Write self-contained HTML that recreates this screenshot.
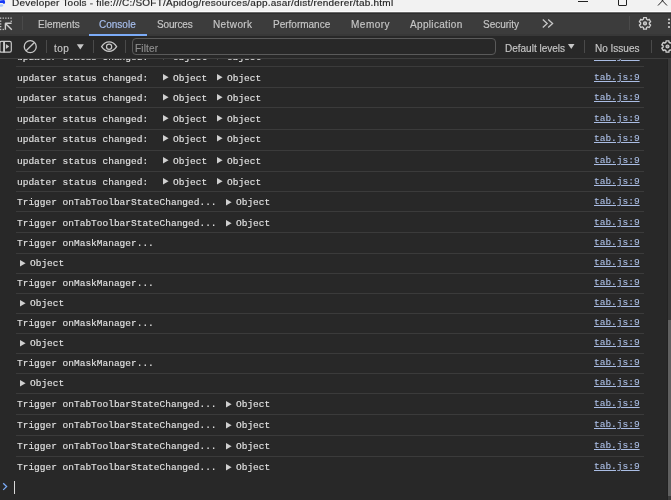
<!DOCTYPE html>
<html><head><meta charset="utf-8">
<style>
*{box-sizing:border-box}
html,body{margin:0;padding:0;width:671px;height:500px;overflow:hidden;background:#282828}
.a{position:absolute;white-space:nowrap;will-change:transform}
.s{font-family:"Liberation Sans",sans-serif;-webkit-text-stroke:0.15px currentColor}
.m{font-family:"Liberation Mono",monospace;font-size:9.5px;color:#e3e3e3;line-height:12px;-webkit-text-stroke:0.12px #e3e3e3}
.b{position:absolute}
.tab{font-size:10px;color:#c7c7c7;top:18px;line-height:14px}
.tb{font-size:10px;color:#c7c7c7;top:41px;line-height:14px}
.div{position:absolute;width:1px;background:#4a4a4a}
.sep{position:absolute;left:16px;width:627.5px;height:1px;background:#3b3b3b}
.lnk{left:594px;color:#aabde4;-webkit-text-stroke:0.12px #aabde4;text-decoration:underline}
.tri{position:absolute}
#con{position:absolute;left:0;top:59px;width:667px;height:441px;overflow:hidden}
</style></head><body>
<div class="b" style="left:0;top:0;width:671px;height:11px;background:#f2f2f2"></div>
<div class="b" style="left:0;top:11px;width:671px;height:1px;background:#fcfcfc"></div>
<div class="b" style="left:0;top:12px;width:671px;height:1px;background:#6a6a6a"></div>
<div class="b" style="left:0;top:13px;width:671px;height:1px;background:#2e2e2e"></div>
<div class="b" style="left:0;top:14px;width:671px;height:20px;background:#3c3c3c"></div>
<div class="b" style="left:0;top:34px;width:671px;height:2px;background:#383838"></div>
<div class="b" style="left:0;top:58px;width:671px;height:1px;background:#3e3e3e"></div>

<!-- title -->
<svg class="b" style="left:0;top:0" width="8" height="9" viewBox="0 0 8 9"><path d="M0,0.6 L4,0 L4.8,0.6 L5.1,2.6 Q5,3.9 4,3.9 Q3.2,3.9 2.6,3.1 L0,3.1Z" fill="#1438f8"/><ellipse cx="1.3" cy="5.5" rx="1.9" ry="1.3" fill="#a8c8fb"/></svg>
<div class="a s" style="left:12px;top:-3px;font-size:10px;color:#1a1a1a;line-height:12px;letter-spacing:0.22px;transform:scaleY(0.84);transform-origin:0 8.9px">Developer Tools - file:///C:/SOFT/Apidog/resources/app.asar/dist/renderer/tab.html</div>
<div class="b" style="left:578px;top:1px;width:10px;height:1px;background:#222"></div>
<div class="b" style="left:618px;top:-4px;width:9px;height:10px;border:1px solid #222;border-radius:1px"></div>
<svg class="b" style="left:657px;top:-4px" width="11" height="11" viewBox="0 0 11 11"><path d="M1,0 L10,9.5 M10,0 L1,9.5" stroke="#222" stroke-width="1"/></svg>

<!-- tab bar -->
<svg class="b" style="left:0;top:15px" width="14" height="18" viewBox="0 0 14 18">
 <g fill="#c7c7c7">
  <rect x="0" y="2.5" width="1.3" height="1.3"/><rect x="2.6" y="2.5" width="1.3" height="1.3"/><rect x="5.2" y="2.5" width="1.3" height="1.3"/><rect x="7.8" y="2.5" width="1.3" height="1.3"/><rect x="10.4" y="2.5" width="1.3" height="1.3"/>
  <rect x="0" y="5.5" width="1.3" height="1.3"/><rect x="0" y="8.3" width="1.3" height="1.3"/><rect x="0" y="11" width="1.3" height="1.3"/><rect x="0" y="13.8" width="1.3" height="1.3"/><rect x="2.6" y="13.8" width="1.3" height="1.3"/>
  <rect x="10.6" y="5.6" width="1.3" height="1.3"/>
 </g>
 <path d="M5.5,8.5 L11.8,14.8 M5.2,8.2 L11.6,8.2 M5.4,8.2 L5.4,14.8" stroke="#d0d0d0" stroke-width="1.4" fill="none"/>
</svg>
<div class="div" style="left:22px;top:16px;height:14px"></div>
<div class="a s tab" style="left:38px">Elements</div>
<div class="a s tab" style="left:99px;color:#a8c0f0">Console</div>
<div class="b" style="left:89px;top:34px;width:58px;height:2px;background:#7cacf8"></div>
<div class="a s tab" style="left:156.5px;letter-spacing:-0.15px">Sources</div>
<div class="a s tab" style="left:213px;letter-spacing:0.4px">Network</div>
<div class="a s tab" style="left:273px">Performance</div>
<div class="a s tab" style="left:351px;letter-spacing:0.5px">Memory</div>
<div class="a s tab" style="left:410px;letter-spacing:0.33px">Application</div>
<div class="a s tab" style="left:482.5px">Security</div>
<svg class="b" style="left:541px;top:18px" width="14" height="11" viewBox="0 0 14 11"><path d="M1.8,1.6 L6.2,5.6 L1.8,9.6 M7.2,1.6 L11.6,5.6 L7.2,9.6" stroke="#c7c7c7" stroke-width="1.3" fill="none"/></svg>
<div class="div" style="left:629px;top:16px;height:14px"></div>
<svg class="b" style="left:636px;top:14px" width="18" height="18" viewBox="636 14 18 18"><path d="M646.56,19.29 L646.46,17.68 L643.54,17.68 L643.44,19.29 L642.22,19.99 L640.78,19.28 L639.32,21.81 L640.66,22.69 L640.66,24.11 L639.32,24.99 L640.78,27.52 L642.22,26.81 L643.44,27.51 L643.54,29.12 L646.46,29.12 L646.56,27.51 L647.78,26.81 L649.22,27.52 L650.68,24.99 L649.34,24.11 L649.34,22.69 L650.68,21.81 L649.22,19.28 L647.78,19.99Z" stroke="#d0d0d0" stroke-width="1.3" fill="none" stroke-linejoin="round"/><circle cx="645" cy="23.4" r="1.5" stroke="#d0d0d0" stroke-width="1.2" fill="#9a9a9a"/></svg>
<svg class="b" style="left:666px;top:17px" width="5" height="12" viewBox="0 0 5 12"><circle cx="3" cy="2.5" r="1.1" fill="#d0d0d0"/><circle cx="3" cy="6" r="1.1" fill="#d0d0d0"/><circle cx="3" cy="10" r="1.1" fill="#d0d0d0"/></svg>

<!-- toolbar -->
<svg class="b" style="left:0;top:38px" width="14" height="18" viewBox="0 38 14 18">
 <rect x="-0.1" y="41.3" width="11.4" height="10.9" rx="1.6" stroke="#c7c7c7" stroke-width="1.2" fill="none"/>
 <rect x="3.1" y="41" width="1.9" height="11.5" fill="#c7c7c7"/>
 <path d="M5.9,43.9 L9.2,46.5 L5.9,49Z" fill="#c7c7c7"/>
</svg>
<svg class="b" style="left:22px;top:38px" width="18" height="18" viewBox="22 38 18 18">
 <circle cx="30.25" cy="46.65" r="6.0" stroke="#c7c7c7" stroke-width="1.3" fill="none"/>
 <path d="M26.1,50.8 L34.4,42.5" stroke="#c7c7c7" stroke-width="1.3"/>
</svg>
<div class="div" style="left:46px;top:40px;height:13px"></div>
<div class="a s tb" style="left:54px;top:41.5px;letter-spacing:0.45px">top</div>
<svg class="b" style="left:76px;top:43px" width="9" height="8" viewBox="0 0 9 8"><path d="M0.8,1.3 L7.8,1.3 L4.3,6.4Z" fill="#c7c7c7"/></svg>
<div class="div" style="left:93px;top:40px;height:13px"></div>
<svg class="b" style="left:99px;top:39px" width="20" height="15" viewBox="99 39 20 15">
 <path d="M101.6,46.55 C104.2,42.6 106.6,41.85 109.1,41.85 C111.6,41.85 114,42.6 116.6,46.55 C114,50.5 111.6,51.25 109.1,51.25 C106.6,51.25 104.2,50.5 101.6,46.55Z" stroke="#c7c7c7" stroke-width="1.3" fill="none"/>
 <circle cx="109.1" cy="46.7" r="2.6" stroke="#c7c7c7" stroke-width="1.2" fill="none"/>
</svg>
<div class="div" style="left:125px;top:40px;height:13px"></div>
<div class="b" style="left:132px;top:38px;width:364px;height:17px;border:1px solid #5a5a5a;border-radius:4px"></div>
<div class="a s tb" style="left:135px;top:42px;letter-spacing:0.15px;color:#8f8f8f">Filter</div>
<div class="a s tb" style="left:504.5px;top:41.5px">Default levels</div>
<svg class="b" style="left:567px;top:43px" width="9" height="8" viewBox="0 0 9 8"><path d="M1,1 L7.5,1 L4.25,5.9Z" fill="#c7c7c7"/></svg>
<div class="div" style="left:584px;top:40px;height:13px"></div>
<div class="a s tb" style="left:594.5px;top:41.5px">No Issues</div>
<div class="div" style="left:651px;top:40px;height:13px"></div>
<svg class="b" style="left:658px;top:37px" width="13" height="19" viewBox="658 37 13 19"><path d="M669.06,42.39 L668.96,40.78 L666.04,40.78 L665.94,42.39 L664.72,43.09 L663.28,42.38 L661.82,44.91 L663.16,45.79 L663.16,47.21 L661.82,48.09 L663.28,50.62 L664.72,49.91 L665.94,50.61 L666.04,52.22 L668.96,52.22 L669.06,50.61 L670.28,49.91 L671.72,50.62 L673.18,48.09 L671.84,47.21 L671.84,45.79 L673.18,44.91 L671.72,42.38 L670.28,43.09Z" stroke="#d0d0d0" stroke-width="1.3" fill="none" stroke-linejoin="round"/><circle cx="667.5" cy="46.5" r="1.5" stroke="#d0d0d0" stroke-width="1.2" fill="#9a9a9a"/></svg>

<!-- console -->
<div id="con">
<div class="a m" style="left:16.5px;top:-7px">updater status changed:</div>
<svg class="tri" style="left:162.90px;top:-6.10px" width="7" height="8" viewBox="0 0 7 8"><path d="M0,0 L5.6,3.3 L0,6.6Z" fill="#d0d0d0"/></svg>
<div class="a m" style="left:173px;top:-7px">Object</div>
<svg class="tri" style="left:217.00px;top:-6.10px" width="7" height="8" viewBox="0 0 7 8"><path d="M0,0 L5.6,3.3 L0,6.6Z" fill="#d0d0d0"/></svg>
<div class="a m" style="left:226.8px;top:-7px">Object</div>
<div class="a m lnk" style="top:-8px">tab.js:9</div>
<div class="a m" style="left:16.5px;top:14px">updater status changed:</div>
<svg class="tri" style="left:162.90px;top:14.90px" width="7" height="8" viewBox="0 0 7 8"><path d="M0,0 L5.6,3.3 L0,6.6Z" fill="#d0d0d0"/></svg>
<div class="a m" style="left:173px;top:14px">Object</div>
<svg class="tri" style="left:217.00px;top:14.90px" width="7" height="8" viewBox="0 0 7 8"><path d="M0,0 L5.6,3.3 L0,6.6Z" fill="#d0d0d0"/></svg>
<div class="a m" style="left:226.8px;top:14px">Object</div>
<div class="a m lnk" style="top:13px">tab.js:9</div>
<div class="a m" style="left:16.5px;top:34px">updater status changed:</div>
<svg class="tri" style="left:162.90px;top:34.90px" width="7" height="8" viewBox="0 0 7 8"><path d="M0,0 L5.6,3.3 L0,6.6Z" fill="#d0d0d0"/></svg>
<div class="a m" style="left:173px;top:34px">Object</div>
<svg class="tri" style="left:217.00px;top:34.90px" width="7" height="8" viewBox="0 0 7 8"><path d="M0,0 L5.6,3.3 L0,6.6Z" fill="#d0d0d0"/></svg>
<div class="a m" style="left:226.8px;top:34px">Object</div>
<div class="a m lnk" style="top:33px">tab.js:9</div>
<div class="a m" style="left:16.5px;top:55px">updater status changed:</div>
<svg class="tri" style="left:162.90px;top:55.90px" width="7" height="8" viewBox="0 0 7 8"><path d="M0,0 L5.6,3.3 L0,6.6Z" fill="#d0d0d0"/></svg>
<div class="a m" style="left:173px;top:55px">Object</div>
<svg class="tri" style="left:217.00px;top:55.90px" width="7" height="8" viewBox="0 0 7 8"><path d="M0,0 L5.6,3.3 L0,6.6Z" fill="#d0d0d0"/></svg>
<div class="a m" style="left:226.8px;top:55px">Object</div>
<div class="a m lnk" style="top:54px">tab.js:9</div>
<div class="a m" style="left:16.5px;top:75px">updater status changed:</div>
<svg class="tri" style="left:162.90px;top:75.90px" width="7" height="8" viewBox="0 0 7 8"><path d="M0,0 L5.6,3.3 L0,6.6Z" fill="#d0d0d0"/></svg>
<div class="a m" style="left:173px;top:75px">Object</div>
<svg class="tri" style="left:217.00px;top:75.90px" width="7" height="8" viewBox="0 0 7 8"><path d="M0,0 L5.6,3.3 L0,6.6Z" fill="#d0d0d0"/></svg>
<div class="a m" style="left:226.8px;top:75px">Object</div>
<div class="a m lnk" style="top:74px">tab.js:9</div>
<div class="a m" style="left:16.5px;top:97px">updater status changed:</div>
<svg class="tri" style="left:162.90px;top:97.90px" width="7" height="8" viewBox="0 0 7 8"><path d="M0,0 L5.6,3.3 L0,6.6Z" fill="#d0d0d0"/></svg>
<div class="a m" style="left:173px;top:97px">Object</div>
<svg class="tri" style="left:217.00px;top:97.90px" width="7" height="8" viewBox="0 0 7 8"><path d="M0,0 L5.6,3.3 L0,6.6Z" fill="#d0d0d0"/></svg>
<div class="a m" style="left:226.8px;top:97px">Object</div>
<div class="a m lnk" style="top:96px">tab.js:9</div>
<div class="a m" style="left:16.5px;top:118px">updater status changed:</div>
<svg class="tri" style="left:162.90px;top:118.90px" width="7" height="8" viewBox="0 0 7 8"><path d="M0,0 L5.6,3.3 L0,6.6Z" fill="#d0d0d0"/></svg>
<div class="a m" style="left:173px;top:118px">Object</div>
<svg class="tri" style="left:217.00px;top:118.90px" width="7" height="8" viewBox="0 0 7 8"><path d="M0,0 L5.6,3.3 L0,6.6Z" fill="#d0d0d0"/></svg>
<div class="a m" style="left:226.8px;top:118px">Object</div>
<div class="a m lnk" style="top:117px">tab.js:9</div>
<div class="a m" style="left:16.5px;top:138px">Trigger onTabToolbarStateChanged...</div>
<svg class="tri" style="left:225.90px;top:139.80px" width="7" height="8" viewBox="0 0 7 8"><path d="M0,0 L5.6,3.3 L0,6.6Z" fill="#d0d0d0"/></svg>
<div class="a m" style="left:235.8px;top:138px">Object</div>
<div class="a m lnk" style="top:137px">tab.js:9</div>
<div class="a m" style="left:16.5px;top:159px">Trigger onTabToolbarStateChanged...</div>
<svg class="tri" style="left:225.90px;top:160.80px" width="7" height="8" viewBox="0 0 7 8"><path d="M0,0 L5.6,3.3 L0,6.6Z" fill="#d0d0d0"/></svg>
<div class="a m" style="left:235.8px;top:159px">Object</div>
<div class="a m lnk" style="top:158px">tab.js:9</div>
<div class="a m" style="left:16.5px;top:179px">Trigger onMaskManager...</div>
<div class="a m lnk" style="top:178px">tab.js:9</div>
<svg class="tri" style="left:19.80px;top:200.80px" width="7" height="8" viewBox="0 0 7 8"><path d="M0,0 L5.6,3.3 L0,6.6Z" fill="#d0d0d0"/></svg>
<div class="a m" style="left:29.6px;top:199px">Object</div>
<div class="a m lnk" style="top:198px">tab.js:9</div>
<div class="a m" style="left:16.5px;top:219px">Trigger onMaskManager...</div>
<div class="a m lnk" style="top:218px">tab.js:9</div>
<svg class="tri" style="left:19.80px;top:240.80px" width="7" height="8" viewBox="0 0 7 8"><path d="M0,0 L5.6,3.3 L0,6.6Z" fill="#d0d0d0"/></svg>
<div class="a m" style="left:29.6px;top:239px">Object</div>
<div class="a m lnk" style="top:238px">tab.js:9</div>
<div class="a m" style="left:16.5px;top:259px">Trigger onMaskManager...</div>
<div class="a m lnk" style="top:258px">tab.js:9</div>
<svg class="tri" style="left:19.80px;top:280.80px" width="7" height="8" viewBox="0 0 7 8"><path d="M0,0 L5.6,3.3 L0,6.6Z" fill="#d0d0d0"/></svg>
<div class="a m" style="left:29.6px;top:279px">Object</div>
<div class="a m lnk" style="top:278px">tab.js:9</div>
<div class="a m" style="left:16.5px;top:299px">Trigger onMaskManager...</div>
<div class="a m lnk" style="top:298px">tab.js:9</div>
<svg class="tri" style="left:19.80px;top:320.80px" width="7" height="8" viewBox="0 0 7 8"><path d="M0,0 L5.6,3.3 L0,6.6Z" fill="#d0d0d0"/></svg>
<div class="a m" style="left:29.6px;top:319px">Object</div>
<div class="a m lnk" style="top:318px">tab.js:9</div>
<div class="a m" style="left:16.5px;top:340px">Trigger onTabToolbarStateChanged...</div>
<svg class="tri" style="left:225.90px;top:341.80px" width="7" height="8" viewBox="0 0 7 8"><path d="M0,0 L5.6,3.3 L0,6.6Z" fill="#d0d0d0"/></svg>
<div class="a m" style="left:235.8px;top:340px">Object</div>
<div class="a m lnk" style="top:339px">tab.js:9</div>
<div class="a m" style="left:16.5px;top:361px">Trigger onTabToolbarStateChanged...</div>
<svg class="tri" style="left:225.90px;top:362.80px" width="7" height="8" viewBox="0 0 7 8"><path d="M0,0 L5.6,3.3 L0,6.6Z" fill="#d0d0d0"/></svg>
<div class="a m" style="left:235.8px;top:361px">Object</div>
<div class="a m lnk" style="top:360px">tab.js:9</div>
<div class="a m" style="left:16.5px;top:382px">Trigger onTabToolbarStateChanged...</div>
<svg class="tri" style="left:225.90px;top:383.80px" width="7" height="8" viewBox="0 0 7 8"><path d="M0,0 L5.6,3.3 L0,6.6Z" fill="#d0d0d0"/></svg>
<div class="a m" style="left:235.8px;top:382px">Object</div>
<div class="a m lnk" style="top:381px">tab.js:9</div>
<div class="a m" style="left:16.5px;top:403px">Trigger onTabToolbarStateChanged...</div>
<svg class="tri" style="left:225.90px;top:404.80px" width="7" height="8" viewBox="0 0 7 8"><path d="M0,0 L5.6,3.3 L0,6.6Z" fill="#d0d0d0"/></svg>
<div class="a m" style="left:235.8px;top:403px">Object</div>
<div class="a m lnk" style="top:402px">tab.js:9</div>
<div class="sep" style="top:7.45px"></div>
<div class="sep" style="top:28.10px"></div>
<div class="sep" style="top:48.45px"></div>
<div class="sep" style="top:69.65px"></div>
<div class="sep" style="top:90.50px"></div>
<div class="sep" style="top:111.50px"></div>
<div class="sep" style="top:131.75px"></div>
<div class="sep" style="top:152.40px"></div>
<div class="sep" style="top:173.35px"></div>
<div class="sep" style="top:193.50px"></div>
<div class="sep" style="top:213.80px"></div>
<div class="sep" style="top:233.55px"></div>
<div class="sep" style="top:254.00px"></div>
<div class="sep" style="top:273.55px"></div>
<div class="sep" style="top:294.00px"></div>
<div class="sep" style="top:313.55px"></div>
<div class="sep" style="top:334.20px"></div>
<div class="sep" style="top:355.00px"></div>
<div class="sep" style="top:375.75px"></div>
<div class="sep" style="top:396.85px"></div>
</div>
<svg class="b" style="left:0;top:480px" width="20" height="16" viewBox="0 480 20 16"><path d="M3.2,483.3 L6.6,486.6 L3.2,489.9" stroke="#7cacf8" stroke-width="1.3" fill="none"/></svg>
<div class="b" style="left:14px;top:481px;width:1px;height:13px;background:#d8d8d8"></div>

<!-- scrollbar -->
<div class="b" style="left:667px;top:59px;width:1px;height:441px;background:#232323"></div>
<div class="b" style="left:668px;top:59px;width:3px;height:441px;background:#3a3a3a"></div>
<div class="b" style="left:668px;top:320px;width:3px;height:176px;background:#606060"></div>
</body></html>
